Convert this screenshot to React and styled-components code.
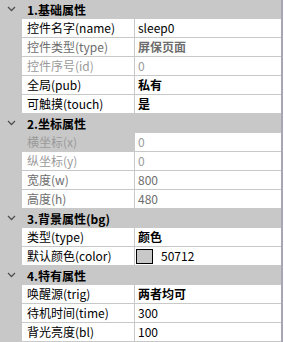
import React from "react";
import styled, { createGlobalStyle } from "styled-components";

const Global = createGlobalStyle`
  html, body { margin: 0; padding: 0; background: #fff; }
  body { font-family: "Microsoft YaHei", "Noto Sans CJK SC", "Noto Sans", sans-serif; }
`;

const Frame = styled.div`
  width: 284px;
  height: 342px;
  display: flex;
  overflow: hidden;
  background: #fff;
`;

const Grid = styled.div`
  width: 281px;
  height: 342px;
  background: #c8c8c8;
  display: flex;
  flex-direction: column;
`;

const Edge = styled.div`
  width: 2px;
  background: #a6a6b4;
`;

const Header = styled.div`
  height: 18px;
  margin-bottom: 1px;
  display: flex;
  align-items: center;
  font-size: 12px;
  font-weight: bold;
  color: #000;
`;

const Chevron = styled.span`
  width: 27px;
  display: flex;
  justify-content: center;
  padding-right: 5px;
  box-sizing: border-box;
`;

const Row = styled.div`
  height: 18px;
  margin-bottom: 1px;
  margin-left: 22px;
  display: flex;
  font-size: 12px;
  line-height: 18px;
`;

const Label = styled.div`
  width: 112px;
  padding-left: 5px;
  box-sizing: border-box;
  background: ${(p) => (p.$selected ? "#c8c8c8" : "#fff")};
  color: ${(p) => p.$tone};
  margin-right: 1px;
  white-space: nowrap;
`;

const Value = styled.div`
  flex: 1;
  background: #fff;
  padding-left: 3px;
  color: ${(p) => p.$tone};
  font-weight: ${(p) => (p.$bold ? "bold" : "normal")};
  display: flex;
  align-items: center;
  gap: 8px;
  white-space: nowrap;
`;

const Swatch = styled.span`
  width: 15px;
  height: 13px;
  border: 1px solid #000;
  background: #c8c8c8;
  margin-left: -2px;
`;

const BLACK = "#000";
const GRAY = "#6d6d6d";
const LIGHT = "#9a9a9a";

const sections = [
  {
    title: "1.基础属性",
    rows: [
      { l: "控件名字(name)", v: "sleep0" },
      { l: "控件类型(type)", v: "屏保页面", lt: GRAY, vt: GRAY, b: true },
      { l: "控件序号(id)", v: "0", lt: LIGHT, vt: LIGHT },
      { l: "全局(pub)", v: "私有", b: true },
      { l: "可触摸(touch)", v: "是", b: true },
    ],
  },
  {
    title: "2.坐标属性",
    rows: [
      { l: "横坐标(x)", v: "0", lt: LIGHT, vt: LIGHT, sel: true },
      { l: "纵坐标(y)", v: "0", lt: LIGHT, vt: LIGHT },
      { l: "宽度(w)", v: "800", lt: GRAY, vt: GRAY },
      { l: "高度(h)", v: "480", lt: GRAY, vt: GRAY },
    ],
  },
  {
    title: "3.背景属性(bg)",
    rows: [
      { l: "类型(type)", v: "颜色", b: true },
      { l: "默认颜色(color)", v: "50712", swatch: true },
    ],
  },
  {
    title: "4.特有属性",
    rows: [
      { l: "唤醒源(trig)", v: "两者均可", b: true },
      { l: "待机时间(time)", v: "300" },
      { l: "背光亮度(bl)", v: "100" },
    ],
  },
];

const ChevronIcon = () => (
  <svg width="9" height="6" viewBox="0 0 9 6">
    <path d="M1 1 L4.5 4.5 L8 1" fill="none" stroke="#505050" strokeWidth="1.3" />
  </svg>
);

export default function App() {
  return (
    <Frame>
      <Global />
      <Grid>
        {sections.map((s) => (
          <React.Fragment key={s.title}>
            <Header>
              <Chevron>
                <ChevronIcon />
              </Chevron>
              {s.title}
            </Header>
            {s.rows.map((r) => (
              <Row key={r.l}>
                <Label $tone={r.lt || BLACK} $selected={r.sel}>
                  {r.l}
                </Label>
                <Value $tone={r.vt || BLACK} $bold={r.b}>
                  {r.swatch && <Swatch />}
                  {r.v}
                </Value>
              </Row>
            ))}
          </React.Fragment>
        ))}
      </Grid>
      <Edge />
    </Frame>
  );
}
